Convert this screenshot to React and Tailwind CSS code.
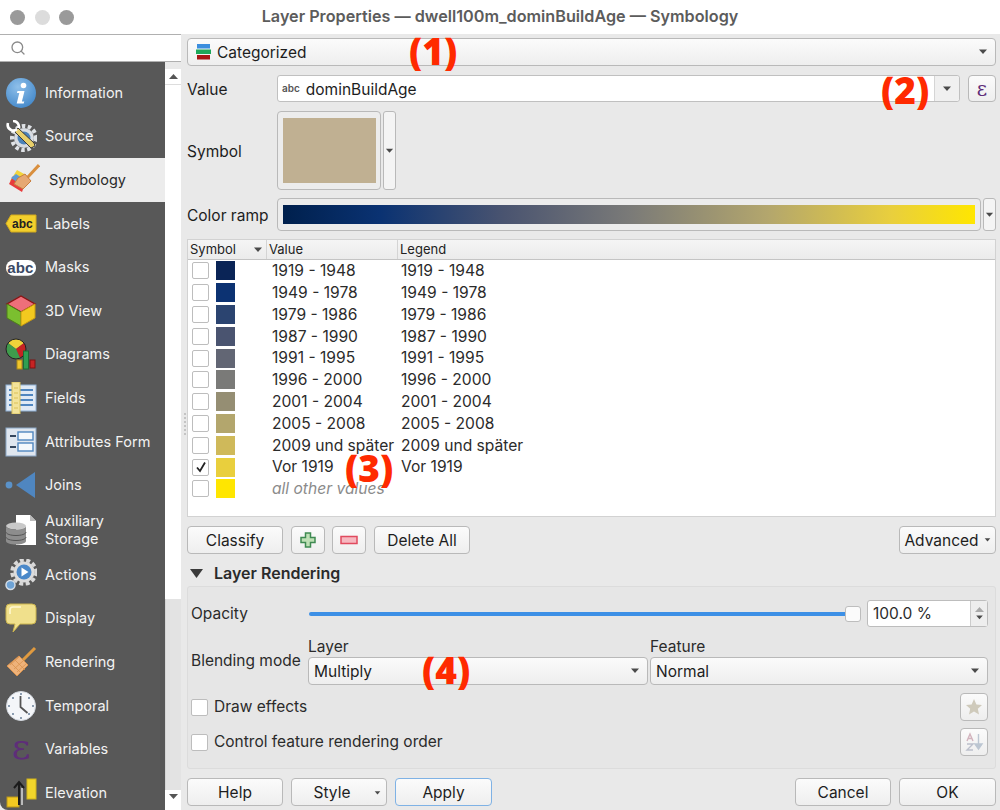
import { Search } from "lucide-react";

const font = "font-['Inter','Liberation_Sans',sans-serif]";

const face = "h-[28px] rounded-[4px] border border-[#b9b9b9] bg-linear-to-b from-[#fbfbfb] to-[#eeeeee] text-[#1d1d1d]";
const btn = `flex items-center justify-center ${face}`;

// Inter sits a pixel higher than the system font in the shot
function T({ children, className = "" }) {
    return <span className={`translate-y-px ${className}`}>{children}</span>;
}

function Caret({ className = "" }) {
    return (
        <svg width="10" height="6" viewBox="0 0 10 6" className={className}>
            <path d="M1 0.5h8L5 5z" fill="#4a4a4a" />
        </svg>
    );
}

function Combo({ children, className = "" }) {
    return (
        <div className={`flex items-center justify-between pl-[5px] pr-[7px] ${face} ${className}`}>
            <div className="flex items-center min-w-0">{children}</div>
            <Caret />
        </div>
    );
}

function Check({ checked, size = "w-[17px] h-[17px]" }) {
    return (
        <div className={`${size} shrink-0 rounded-[2px] border border-[#bdbdbd] bg-white flex items-center justify-center`}>
            {checked && (
                <svg width="12" height="12" viewBox="0 0 12 12">
                    <path d="M2 6.5l3 3.5 5-8.5" fill="none" stroke="#222" strokeWidth="1.8" />
                </svg>
            )}
        </div>
    );
}

const IconInfo = () => (
    <svg viewBox="0 0 32 32" className="w-full h-full">
        <defs>
            <radialGradient id="ig" cx="0.4" cy="0.3" r="0.8">
                <stop offset="0" stopColor="#8fc0ea" />
                <stop offset="1" stopColor="#3f85c8" />
            </radialGradient>
        </defs>
        <circle cx="16" cy="16" r="15" fill="url(#ig)" />
        <circle cx="18.5" cy="8.5" r="2.8" fill="#fff" />
        <path d="M12.5 14h7l-2.6 10.5h2.4l-.6 2h-7l2.6-10.5h-2.4z" fill="#fff" />
    </svg>
);

const IconSource = () => (
    <svg viewBox="0 0 32 32" className="w-full h-full">
        <circle cx="19" cy="18" r="12" fill="none" stroke="#dfe2e6" strokeWidth="4" strokeDasharray="3.5 2.5" />
        <circle cx="19" cy="18" r="10" fill="#d8dce2" />
        <circle cx="19" cy="18" r="6.5" fill="#4c82b8" />
        <path d="M10 12l16 16 4-2 -1-3L13 8z" fill="#e8cf6a" stroke="#3a3a3a" strokeWidth="1" />
        <path d="M3 3a6 6 0 0 0 3 7 5 5 0 0 0 6-1M8 1a6 6 0 0 1 6 7" fill="none" stroke="#fff" strokeWidth="2.6" />
    </svg>
);

const IconSymbology = () => (
    <svg viewBox="0 0 32 32" className="w-full h-full">
        <path d="M2 17L9 6l9 5-7 9z" fill="#f2d53c" />
        <path d="M1 20l4-8 12 8-3 8z" fill="#e83c3c" />
        <path d="M3 14l5-4 6 4-5 4z" fill="#5d9bd5" />
        <path d="M31 1L19 14" stroke="#d98f3e" strokeWidth="3" />
        <path d="M10 14l7-4 6 7-8 8-9-5z" fill="#e6a873" stroke="#c97f3f" strokeWidth="1" />
    </svg>
);

const IconLabels = () => (
    <svg viewBox="0 0 32 20" className="w-full">
        <path d="M6 1h25v17H6L1 9.5z" fill="#f2cf2d" stroke="#d1a91c" />
        <text x="7" y="14" fontSize="12" fontWeight="700" fill="#222" fontFamily="Liberation Sans, sans-serif">abc</text>
    </svg>
);

const IconMasks = () => (
    <svg viewBox="0 0 34 20" className="w-full">
        <rect x="1" y="2" width="32" height="17" rx="8.5" fill="#fff" />
        <text x="2.5" y="15.5" fontSize="16" fontWeight="700" fill="#3b4a66" fontFamily="Liberation Sans, sans-serif">abc</text>
    </svg>
);

const Icon3D = () => (
    <svg viewBox="0 0 32 32" className="w-full h-full">
        <path d="M16 1L30 9 16 17 2 9z" fill="#ee6f7a" stroke="#8a1414" strokeWidth="1.4" />
        <path d="M2 9l14 8v14L2 23z" fill="#7bbf2f" stroke="#4e7f1a" strokeWidth="1" />
        <path d="M30 9l-14 8v14l14-8z" fill="#f3c91f" stroke="#c79a12" strokeWidth="1" />
    </svg>
);

const IconDiagrams = () => (
    <svg viewBox="0 0 32 32" className="w-full h-full">
        <path d="M11 11L3 5a10 10 0 0 1 16 0z" fill="#f0d23a" />
        <path d="M11 11l8-6a10 10 0 0 1-4 15z" fill="#c62323" />
        <path d="M11 11l4 9A10 10 0 0 1 3 5z" fill="#3f9c4c" />
        <circle cx="11" cy="11" r="10" fill="none" stroke="#222" strokeWidth="1" />
        <rect x="12" y="22" width="5" height="9" fill="#f0c52b" stroke="#a8891a" />
        <rect x="18.5" y="13" width="5" height="18" fill="#2f9e52" stroke="#1b6b35" />
        <rect x="25" y="22" width="5" height="8" fill="#c62323" stroke="#7e1212" />
    </svg>
);

const IconFields = () => (
    <svg viewBox="0 0 32 32" className="w-full h-full">
        <rect x="1" y="3" width="30" height="26" fill="#dfe9f5" stroke="#8fb1d6" />
        <path d="M4 8h24M4 13h24M4 18h24M4 23h24" stroke="#4f86c0" strokeWidth="2" />
        <rect x="7" y="0" width="8" height="32" fill="#f3e39a" stroke="#d9c25d" />
        <path d="M9 6h4M9 11h4M9 16h4M9 21h4M9 26h4" stroke="#e3cd6f" strokeWidth="1.5" />
    </svg>
);

const IconForm = () => (
    <svg viewBox="0 0 32 32" className="w-full h-full">
        <rect x="1" y="2" width="30" height="28" fill="#dfe6ef" stroke="#8ba7c6" />
        <path d="M5 10h6M5 21h6" stroke="#34465e" strokeWidth="2" />
        <rect x="13" y="6" width="15" height="8" fill="#f4f8fc" stroke="#4f86c0" strokeWidth="1.4" />
        <rect x="13" y="17" width="15" height="8" fill="#f4f8fc" stroke="#4f86c0" strokeWidth="1.4" />
    </svg>
);

const IconJoins = () => (
    <svg viewBox="0 0 32 32" className="w-full h-full">
        <circle cx="4" cy="16" r="3.4" fill="#5a92c9" />
        <path d="M11 16L30 3v26z" fill="#4f86c0" />
    </svg>
);

const IconAux = () => (
    <svg viewBox="0 0 32 32" className="w-full h-full">
        <path d="M11 1h14l6 6v24H11z" fill="#fff" />
        <path d="M25 1v6h6" fill="#bbb" />
        <ellipse cx="11" cy="12" rx="10" ry="3.5" fill="#c9c9c9" />
        <path d="M1 12v15c0 2 4.5 3.5 10 3.5s10-1.5 10-3.5V12c0 2-4.5 3.5-10 3.5S1 14 1 12z" fill="#8d8d8d" />
        <path d="M1 18c0 2 4.5 3.5 10 3.5s10-1.500 10-3.500M1 23c0 2 4.500 3.500 10 3.500s10-1.500 10-3.500" fill="none" stroke="#555" />
    </svg>
);

const IconActions = () => (
    <svg viewBox="0 0 32 32" className="w-full h-full">
        <circle cx="19" cy="13" r="12" fill="none" stroke="#d9d9d9" strokeWidth="3.500" strokeDasharray="4 2.500" />
        <circle cx="19" cy="13" r="10.500" fill="#dcdcdc" />
        <circle cx="19" cy="13" r="7.500" fill="#4a88c9" />
        <path d="M16.500 8.500l7 4.500-7 4.500z" fill="#fff" />
        <circle cx="5.500" cy="26" r="4.500" fill="#6ea3d6" stroke="#d5dde6" strokeWidth="1.500" />
    </svg>
);

const IconDisplay = () => (
    <svg viewBox="0 0 32 32" className="w-full h-full">
        <path d="M5 2h22a4 4 0 0 1 4 4v12a4 4 0 0 1-4 4H15l-7 8 2-8H5a4 4 0 0 1-4-4V6a4 4 0 0 1 4-4z" fill="#f0e08c" stroke="#cbb44e" />
        <path d="M5 12V8a3 3 0 0 1 3-3h8" fill="none" stroke="#fff8d0" strokeWidth="1.600" />
    </svg>
);

const IconBrush = () => (
    <svg viewBox="0 0 32 32" className="w-full h-full">
        <path d="M30 2L17 15" stroke="#e09a3f" strokeWidth="3" />
        <path d="M2 20l12-10 9 9-11 11z" fill="#eeb27a" stroke="#d8924e" />
        <path d="M6 17l10 10M10 14l10 10M14 11l-9 8M18 15l-9 8M21 18l-9 8" stroke="#d8924e" strokeWidth="0.800" />
    </svg>
);

const IconClock = () => (
    <svg viewBox="0 0 32 32" className="w-full h-full">
        <circle cx="16" cy="16" r="14.500" fill="#f4f6f9" stroke="#d3d8df" />
        <path d="M15.500 6v11l7 6" fill="none" stroke="#555" strokeWidth="1.800" />
        <g fill="#6a7f99">
            <circle cx="16" cy="4" r="1" />
            <circle cx="16" cy="28" r="1" />
            <circle cx="4" cy="16" r="1" />
            <circle cx="28" cy="16" r="1" />
            <circle cx="8" cy="8" r="1" />
            <circle cx="24" cy="8" r="1" />
            <circle cx="8" cy="24" r="1" />
            <circle cx="24" cy="24" r="1" />
        </g>
    </svg>
);

const IconElevation = () => (
    <svg viewBox="0 0 32 32" className="w-full h-full">
        <rect x="2" y="20" width="12" height="10" fill="#f2c921" stroke="#b8951a" />
        <rect x="22" y="2" width="9" height="20" fill="#f2d62b" stroke="#d1b31c" />
        <path d="M14 28V6M9 11l5-6 5 6" fill="none" stroke="#1c1c1c" strokeWidth="2" />
        <path d="M17 28V11" stroke="#ddd" strokeWidth="1.500" />
    </svg>
);

const IconEps = ({ className }) => (
    <span className={`font-['DejaVu_Serif',serif] text-[#5e2d79] ${className}`}>ε</span>
);

const navItems = [
    { name: "Information", icon: <IconInfo /> },
    { name: "Source", icon: <IconSource /> },
    { name: "Symbology", icon: <IconSymbology />, active: true },
    { name: "Labels", icon: <IconLabels /> },
    { name: "Masks", icon: <IconMasks /> },
    { name: "3D View", icon: <Icon3D /> },
    { name: "Diagrams", icon: <IconDiagrams /> },
    { name: "Fields", icon: <IconFields /> },
    { name: "Attributes Form", icon: <IconForm /> },
    { name: "Joins", icon: <IconJoins /> },
    { name: "Auxiliary Storage", icon: <IconAux />, tall: true },
    { name: "Actions", icon: <IconActions /> },
    { name: "Display", icon: <IconDisplay /> },
    { name: "Rendering", icon: <IconBrush /> },
    { name: "Temporal", icon: <IconClock /> },
    { name: "Variables", icon: <IconEps className="text-[36px] leading-none -translate-y-[2px]" /> },
    { name: "Elevation", icon: <IconElevation /> },
];

const categories = [
    ["1919 - 1948", "#0a2456"],
    ["1949 - 1978", "#0c3272"],
    ["1979 - 1986", "#2b4470"],
    ["1987 - 1990", "#4a5470"],
    ["1991 - 1995", "#626674"],
    ["1996 - 2000", "#7a7a78"],
    ["2001 - 2004", "#958e73"],
    ["2005 - 2008", "#b3a66d"],
    ["2009 und später", "#cfb95a"],
    ["Vor 1919", "#e9cf3d", true],
];

function Sidebar() {
    return (
        <div className="w-[181px] shrink-0 flex flex-col">
            <div className="h-[28px] bg-white border-y border-[#b0b0b0] flex items-center pl-[10px]">
                <Search className="w-[16px] h-[16px] text-[#8a8a8a]" />
            </div>
            <div className="flex-1 flex min-h-0">
                <div className="w-[165px] bg-[#585858] pt-[9px] rounded-bl-[8px] overflow-hidden">
                    {navItems.map((item) => (
                        <div
                            key={item.name}
                            className={`flex items-center ${item.tall ? "h-[46px]" : "h-[43.6px]"} ${item.active ? "bg-[#ececec] text-[#2a2a2a] pl-[8px]" : "text-[#f2f2f2] pl-[5px]"}`}
                        >
                            <div className="w-[32px] h-[32px] shrink-0 flex items-center justify-center">{item.icon}</div>
                            <span className={`${item.active ? "ml-[9px]" : "ml-[8px]"} text-[14.5px] leading-[18px] ${item.tall ? "w-[70px]" : ""}`}>{item.name}</span>
                        </div>
                    ))}
                </div>
                <div className="w-[16px] flex flex-col pt-[7px] bg-[#e9e9e9]">
                    <div className="h-[16px] bg-white border-b border-[#ddd] flex items-center justify-center">
                        <svg width="9" height="5" viewBox="0 0 9 5"><path d="M0 5h9L4.500 0z" fill="#555" /></svg>
                    </div>
                    <div className="h-[514px] bg-white" />
                    <div className="flex-1 bg-[#e3e3e3] border-l border-[#d5d5d5]" />
                    <div className="h-[20px] bg-white flex items-start pt-[4px] justify-center">
                        <svg width="9" height="5" viewBox="0 0 9 5"><path d="M0 0h9L4.500 5z" fill="#555" /></svg>
                    </div>
                </div>
            </div>
        </div>
    );
}

function CategoryRow({ value, color, checked, italic }) {
    return (
        <div className="flex items-center h-[21.8px] text-[15.6px]">
            <div className="w-[84px] shrink-0 flex items-center pl-[4px] gap-[7px]">
                <Check checked={checked} />
                <div className="w-[19px] h-[19px]" style={{ backgroundColor: color }} />
            </div>
            {italic ? (
                <span className="italic text-[#8b8b8b]">all other values</span>
            ) : (
                <>
                    <span className="w-[129px] shrink-0 whitespace-nowrap text-[#2b2b2b]">{value}</span>
                    <span className="whitespace-nowrap text-[#2b2b2b]">{value}</span>
                </>
            )}
        </div>
    );
}

function SymbolTable() {
    return (
        <div className="mt-[8px] h-[278px] border border-[#d2d2d2] bg-white flex flex-col">
            <div className="h-[20px] shrink-0 flex bg-linear-to-b from-[#f5f5f5] to-[#ebebeb] border-b border-[#c4c4c4] text-[13px] text-[#222]">
                <div className="w-[79px] flex items-center justify-between pl-[2px] pr-[3px] border-r border-[#d4d4d4]">
                    Symbol <Caret />
                </div>
                <div className="w-[131px] flex items-center pl-[2px] border-r border-[#d4d4d4]">Value</div>
                <div className="flex-1 flex items-center pl-[2px]">Legend</div>
            </div>
            <div>
                {categories.map(([value, color, checked]) => (
                    <CategoryRow key={value} value={value} color={color} checked={checked} />
                ))}
                <CategoryRow color="#ffe600" italic />
            </div>
        </div>
    );
}

function LayerRendering() {
    return (
        <>
            <div className="mt-[10px] h-[19px] flex items-center pl-[3px] gap-[11px]">
                <svg width="13" height="9" viewBox="0 0 13 9"><path d="M0 0h13L6.500 9z" fill="#3a3a3a" /></svg>
                <span className="font-semibold text-[16px] text-[#2b2b2b] -translate-y-px">Layer Rendering</span>
            </div>
            <div className="mt-[3px] h-[183px] rounded-[3px] border border-[#dcdcdc] bg-[#e6e6e6] pl-[3px] pr-[7px] pt-[13px] flex flex-col text-[#2b2b2b]">
                <div className="h-[27px] flex items-center">
                    <span className="w-[118px] shrink-0">Opacity</span>
                    <div className="relative flex-1 h-[4px] rounded-full bg-[#3d90e6]">
                        <div className="absolute right-[-2px] top-[-6px] w-[16px] h-[16px] rounded-[3px] border border-[#bdbdbd] bg-[#fbfbfb]" />
                    </div>
                    <div className="w-[121px] h-[27px] shrink-0 ml-[8px] rounded-[3px] border border-[#bdbdbd] bg-white flex items-center justify-between pl-[5px]">
                        100.0 %
                        <div className="w-[17px] h-full border-l border-[#ccc] bg-[#eeeeee] flex flex-col items-center justify-center gap-[3px]">
                            <svg width="9" height="5" viewBox="0 0 9 5"><path d="M0 5h9L4.500 0z" fill="#a9a9a9" /></svg>
                            <Caret className="w-[9px] h-[5px]" />
                        </div>
                    </div>
                </div>
                <div className="mt-[10px] flex items-end">
                    <span className="w-[117px] shrink-0 mb-[13px] whitespace-nowrap">Blending mode</span>
                    <div className="w-[340px] shrink-0">
                        <div className="h-[18px] leading-[18px] mb-[2px] translate-y-px">Layer</div>
                        <Combo><T>Multiply</T></Combo>
                    </div>
                    <div className="flex-1 ml-[2px]">
                        <div className="h-[18px] leading-[18px] mb-[2px] translate-y-px">Feature</div>
                        <Combo><T>Normal</T></Combo>
                    </div>
                </div>
                <div className="mt-[8px] h-[28px] flex items-center justify-between">
                    <div className="flex items-center gap-[6px]">
                        <Check />
                        Draw effects
                    </div>
                    <div className={`${btn} w-[28px]`}>
                        <svg width="20" height="20" viewBox="0 0 20 20">
                            <path d="M10 2l2.400 5.400 5.600.600-4.200 3.800 1.200 5.700L10 14.600 5 17.500l1.200-5.700L2 8l5.600-.600z" fill="#cfcabb" />
                        </svg>
                    </div>
                </div>
                <div className="mt-[7px] h-[28px] flex items-center justify-between">
                    <div className="flex items-center gap-[6px]">
                        <Check />
                        Control feature rendering order
                    </div>
                    <div className={`${btn} w-[28px]`}>
                        <svg width="20" height="20" viewBox="0 0 20 20">
                            <path d="M3 9l3-7 3 7M4 6.500h4" fill="none" stroke="#d2b3bd" strokeWidth="1.400" />
                            <path d="M3 12h6l-6 6h6" fill="none" stroke="#bcc0cc" strokeWidth="1.400" />
                            <path d="M14.500 2v14M11 12l3.500 5 3.500-5z" fill="#bcc6d2" stroke="#bcc6d2" strokeWidth="1.400" />
                        </svg>
                    </div>
                </div>
            </div>
        </>
    );
}

function Annotation({ children, className }) {
    return (
        <span className={`absolute font-['Open_Sans',sans-serif] font-extrabold text-[#ff2a00] text-[37px] leading-none z-10 ${className}`}>
            {children}
        </span>
    );
}

export default function App() {
    return (
        <div className={`${font} relative w-[1000px] h-[810px] bg-[#e9e9e9] text-[#1d1d1d] overflow-hidden flex flex-col`}>
            {/* Title bar */}
            <div className="relative h-[34px] shrink-0 bg-white flex items-center justify-center text-[16.2px] font-semibold text-[#5c5c5c]">
                <div className="absolute left-[10px] top-[10px] flex gap-[9.500px]">
                    <div className="w-[15px] h-[15px] rounded-full bg-[#9a9a9a]" />
                    <div className="w-[15px] h-[15px] rounded-full bg-[#dcdcdc]" />
                    <div className="w-[15px] h-[15px] rounded-full bg-[#9a9a9a]" />
                </div>
                <span className="-translate-y-px">Layer Properties — dwell100m_dominBuildAge — Symbology</span>
            </div>

            <div className="flex-1 flex min-h-0 text-[15.5px]">
                <Sidebar />

                <div className="flex-1 pl-[6px] pr-[4px] pt-[4px] flex flex-col min-w-0">
                    <Combo>
                        <svg width="16" height="18" viewBox="0 0 16 18" className="mr-[5px] ml-[3px]">
                            <rect x="1" y="1" width="13" height="4.500" fill="#3b8ede" />
                            <rect x="0" y="6.500" width="15" height="4.500" fill="#1ea75a" />
                            <rect x="1" y="12" width="13" height="4.500" fill="#a81616" />
                        </svg>
                        <T>Categorized</T>
                    </Combo>

                    <div className="mt-[9px] h-[27px] flex items-center">
                        <T className="w-[90px] shrink-0">Value</T>
                        <div className="flex-1 h-[27px] rounded-[3px] border border-[#c0c0c0] bg-white flex items-center justify-between">
                            <div className="flex items-center pl-[4px]">
                                <span className="font-semibold text-[10px] text-[#555] mr-[6px]">abc</span>
                                <T>dominBuildAge</T>
                            </div>
                            <div className="w-[25px] h-full border-l border-[#d5d5d5] bg-[#f0f0f0] flex items-center justify-center rounded-r-[3px]">
                                <Caret />
                            </div>
                        </div>
                        <div className={`${btn} w-[28px] !h-[27px] ml-[8px]`}>
                            <IconEps className="text-[20px] leading-none" />
                        </div>
                    </div>

                    <div className="mt-[9px] h-[79px] flex items-center">
                        <T className="w-[90px] shrink-0">Symbol</T>
                        <div className="w-[104px] h-[79px] rounded-[4px] border border-[#b9b9b9] bg-[#ececec] flex items-center justify-center">
                            <div className="w-[93px] h-[65px] bg-[#c0b092]" />
                        </div>
                        <div className="w-[13px] h-[79px] ml-[2px] rounded-[3px] border border-[#b9b9b9] bg-[#f4f4f4] flex items-center justify-center">
                            <Caret className="w-[9px]" />
                        </div>
                    </div>

                    <div className="mt-[8px] h-[33px] flex items-center">
                        <T className="w-[90px] shrink-0">Color ramp</T>
                        <div className="flex-1 h-[33px] rounded-[4px] border border-[#b9b9b9] bg-[#ececec] flex items-center px-[5px]">
                            <div className="w-full h-[19px] bg-[linear-gradient(90deg,#00204d_0%,#0a3272_14%,#4a5470_32%,#7a7a78_50%,#b3a66d_70%,#e9cf3d_88%,#ffe600_100%)]" />
                        </div>
                        <div className="w-[13px] h-[33px] ml-[2px] rounded-[3px] border border-[#b9b9b9] bg-[#f4f4f4] flex items-center justify-center">
                            <Caret className="w-[9px]" />
                        </div>
                    </div>

                    <SymbolTable />

                    <div className="mt-[9px] flex items-center gap-[8px]">
                        <div className={`${btn} w-[96px]`}><T>Classify</T></div>
                        <div className={`${btn} w-[34px]`}>
                            <svg width="18" height="18" viewBox="0 0 18 18">
                                <path d="M6.500 2h5v4.500H16v5h-4.500V16h-5v-4.500H2v-5h4.500z" fill="#bfe0b6" stroke="#3f8a52" strokeWidth="1.500" />
                            </svg>
                        </div>
                        <div className={`${btn} w-[34px] -ml-px`}>
                            <svg width="18" height="18" viewBox="0 0 18 18">
                                <rect x="1" y="5.500" width="16" height="7" fill="#f6b8c0" stroke="#e04a5e" strokeWidth="1.500" />
                            </svg>
                        </div>
                        <div className={`${btn} w-[96px]`}><T>Delete All</T></div>
                        <div className={`${btn} w-[97px] ml-auto gap-[5px]`}>
                            <T>Advanced</T> <Caret className="w-[7px]" />
                        </div>
                    </div>

                    <LayerRendering />

                    <div className="mt-[9px] flex items-center gap-[8px]">
                        <div className={`${btn} w-[96px]`}><T>Help</T></div>
                        <div className={`${btn} w-[96px] relative pr-[14px]`}>
                            <T>Style</T>
                            <Caret className="absolute right-[5px] top-[11px] w-[7px]" />
                        </div>
                        <div className={`${btn} w-[97px] !border-[#7fb2e5]`}><T>Apply</T></div>
                        <div className={`${btn} w-[96px] ml-auto`}><T>Cancel</T></div>
                        <div className={`${btn} w-[97px]`}><T>OK</T></div>
                    </div>
                </div>
            </div>

            {/* splitter grip */}
            <div className="absolute left-[184px] top-[413px] w-[2px] h-[22px] border-l-2 border-dotted border-[#c4c4c4]" />

            <Annotation className="left-[409px] top-[32px]">(1)</Annotation>
            <Annotation className="left-[881px] top-[71px]">(2)</Annotation>
            <Annotation className="left-[345px] top-[449px]">(3)</Annotation>
            <Annotation className="left-[422px] top-[651px]">(4)</Annotation>
        </div>
    );
}
